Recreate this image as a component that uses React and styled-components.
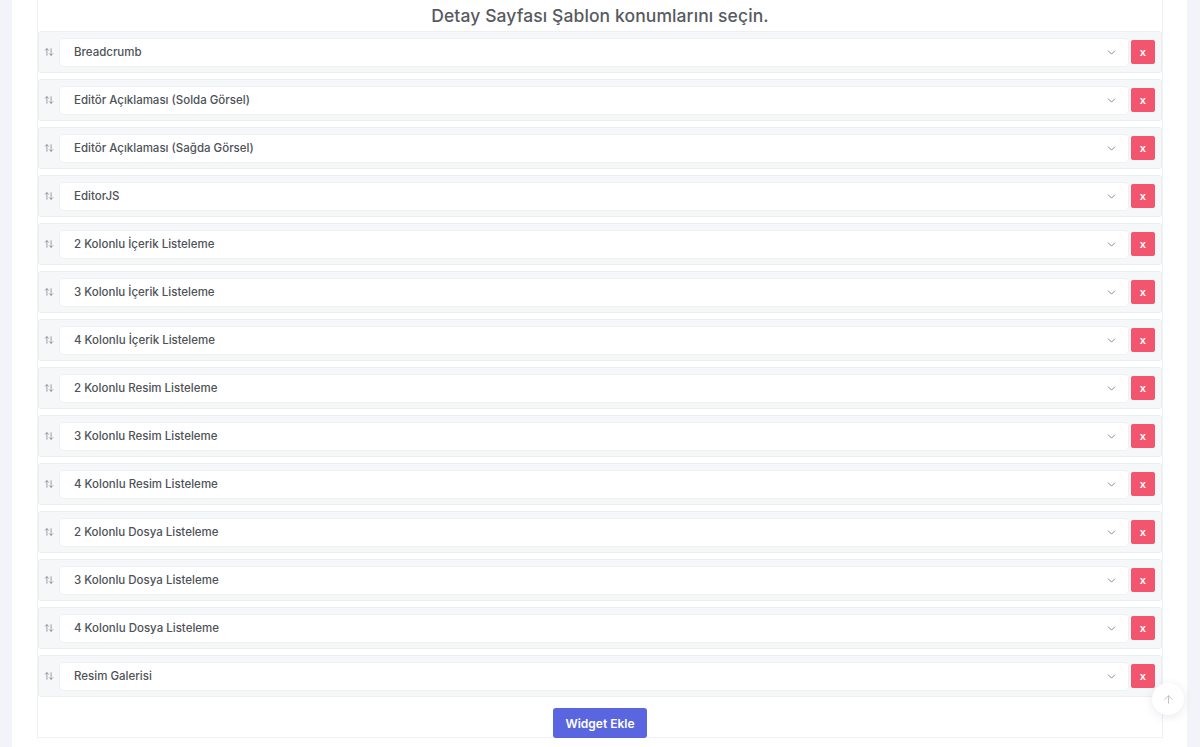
import React from "react";
import styled, { createGlobalStyle } from "styled-components";
import { ArrowUpDown, ChevronDown, ArrowUp } from "lucide-react";

const GlobalStyle = createGlobalStyle`
  html, body {
    margin: 0;
    padding: 0;
    background: #f3f4f9;
    font-family: Inter, "Open Sans", "Liberation Sans", sans-serif;
  }
  * { box-sizing: border-box; }
`;

const Page = styled.div`
  width: 1200px;
  height: 747px;
  padding: 0 13px 0 12px;
  overflow: hidden;
`;

const Sheet = styled.main`
  background: #fff;
  height: 100%;
  padding: 0 24px 0 25px;
`;

const Card = styled.section`
  border: 1px solid #eef0f3;
  border-top: none;
`;

const Title = styled.h2`
  margin: 0;
  height: 31px;
  padding-top: 5px;
  text-align: center;
  font-size: 17.5px;
  font-weight: 500;
  color: #575b61;
  letter-spacing: 0.1px;
`;

const List = styled.div`
  display: flex;
  flex-direction: column;
  gap: 6px;
`;

const Row = styled.div`
  display: flex;
  align-items: center;
  height: 42px;
  padding: 0 6px 0 0;
  background: #f6f7f9;
  border: 1px solid #eceef2;
  border-radius: 3px;
`;

const Handle = styled.span`
  width: 20px;
  display: flex;
  justify-content: center;
  color: #70757c;
  cursor: grab;
`;

const Select = styled.div`
  flex: 1;
  height: 29px;
  display: flex;
  align-items: center;
  justify-content: space-between;
  padding: 0 10px 0 14px;
  background: #fff;
  border: 1px solid #eef0f3;
  border-radius: 4px;
  font-size: 11.5px;
  font-weight: 500;
  color: #4e5258;
  svg { color: #6f747b; }
`;

const RemoveButton = styled.button`
  width: 24px;
  height: 24px;
  margin-left: 2px;
  border: none;
  border-radius: 2px;
  background: #f2566f;
  color: #fff;
  font-family: inherit;
  font-size: 11px;
  font-weight: 600;
  padding: 0;
  cursor: pointer;
`;

const Footer = styled.div`
  display: flex;
  justify-content: center;
  padding-top: 11px;
  margin-bottom: -1px;
`;

const AddButton = styled.button`
  width: 94px;
  height: 30px;
  border: none;
  border-radius: 3px;
  background: #5a66df;
  color: #fff;
  font-family: inherit;
  font-size: 12px;
  font-weight: 600;
  cursor: pointer;
`;

const ScrollTop = styled.button`
  position: fixed;
  right: 16px;
  bottom: 32px;
  width: 32px;
  height: 32px;
  border-radius: 50%;
  border: none;
  background: #fff;
  box-shadow: 0 2px 10px rgba(60, 70, 110, 0.12);
  color: #b4b8c0;
  display: flex;
  align-items: center;
  justify-content: center;
  padding: 0;
`;

const widgets = [
  "Breadcrumb",
  "Editör Açıklaması (Solda Görsel)",
  "Editör Açıklaması (Sağda Görsel)",
  "EditorJS",
  "2 Kolonlu İçerik Listeleme",
  "3 Kolonlu İçerik Listeleme",
  "4 Kolonlu İçerik Listeleme",
  "2 Kolonlu Resim Listeleme",
  "3 Kolonlu Resim Listeleme",
  "4 Kolonlu Resim Listeleme",
  "2 Kolonlu Dosya Listeleme",
  "3 Kolonlu Dosya Listeleme",
  "4 Kolonlu Dosya Listeleme",
  "Resim Galerisi",
];

export default function App() {
  return (
    <Page>
      <GlobalStyle />
      <Sheet>
        <Card>
          <Title>Detay Sayfası Şablon konumlarını seçin.</Title>
          <List>
            {widgets.map((name) => (
              <Row key={name}>
                <Handle>
                  <ArrowUpDown size={10} strokeWidth={1.6} />
                </Handle>
                <Select>
                  <span>{name}</span>
                  <ChevronDown size={13} strokeWidth={1.5} />
                </Select>
                <RemoveButton>x</RemoveButton>
              </Row>
            ))}
          </List>
          <Footer>
            <AddButton>Widget Ekle</AddButton>
          </Footer>
        </Card>
      </Sheet>
      <ScrollTop>
        <ArrowUp size={13} strokeWidth={1.5} />
      </ScrollTop>
    </Page>
  );
}
